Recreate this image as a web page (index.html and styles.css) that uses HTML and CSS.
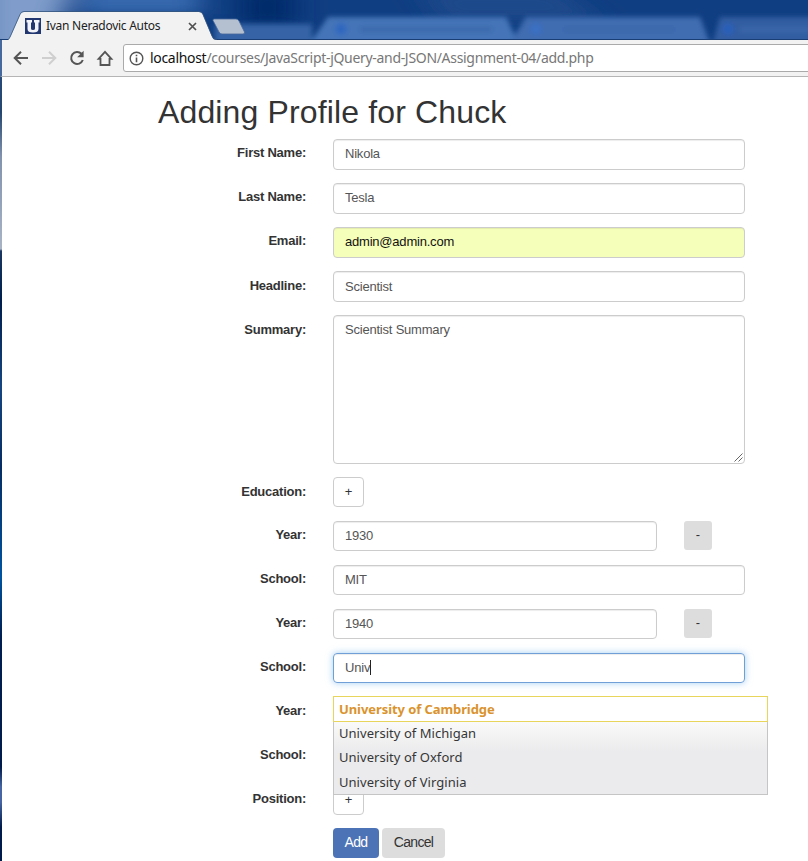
FILE: index.html
```html
<!DOCTYPE html>
<html lang="en">
<head>
<meta charset="utf-8">
<title>Ivan Neradovic Autos</title>
<link rel="stylesheet" href="styles.css">
</head>
<body>
<div class="window">
  <header class="tabs">
    <svg class="glass" width="808" height="40" viewBox="0 0 808 40">
      <defs>
        <filter id="soft" x="-10%" y="-50%" width="120%" height="200%"><feGaussianBlur stdDeviation="2.500"/></filter>
        <filter id="haze" x="-10%" y="-50%" width="120%" height="200%"><feGaussianBlur stdDeviation="14 6"/></filter>
      </defs>
      <g filter="url(#haze)">
        <path d="M-20-20H75L50 50H-20z" fill="#7f9cca"/>
        <path d="M80-20H200V14H80z" fill="#3568ad"/>
        <path d="M240-10H295V24H240z" fill="#002b6a"/>
        <path d="M420-10H560L600 20H440z" fill="#1c488a"/>
      </g>
      <g filter="url(#soft)" fill="#4474b8">
        <path d="M215 24H312V46H215z" fill="#3463a5"/>
        <path d="M328 17H506L520 46H308z"/>
        <path d="M526 17H700L711 46H508z" fill="#3f6cb1"/>
        <path d="M720 17H830V46H712z" fill="#335da1"/>
        <path d="M360 27H492V32H360zM564 27H674V32H564zM740 27H810V32H740z" fill="#3a68aa"/>
        <circle cx="341" cy="29" r="6" fill="#2f67bf"/><circle cx="536" cy="29" r="6" fill="#3a70c3"/><circle cx="728" cy="29" r="6" fill="#2a5fb9"/>
      </g>
      <path d="M0 39.5H808" stroke="#193d75"/>
      <path d="M213 20.500Q212.500 19 214.500 19H236Q238 19 239 21L244.500 32Q245 34 243 34H222Q220 34 219 32z" fill="#b4bfd0" stroke="#48689a" stroke-width=".8"/>
      <path d="M2 40H8Q9.500 39 10.500 36.500L20 15Q21 12 24 12H199Q202 12 203 15L212 36.500Q213 40 217 40z" fill="#f2f2f2"/>
      <path d="M8 39.500Q9.500 38.500 10.500 36L20 14.500Q21 11.500 24 11.500H199Q202 11.500 203 14.500L212 36Q213 39.500 217 39.500" fill="none" stroke="#36577f" stroke-width=".8"/>
    </svg>
    <div class="tab">
      <svg width="16" height="16" viewBox="0 0 16 16"><path fill="#22366f" d="M0 0h16v16H0z"/><path d="M1.500 2H7v2.500H6v6q0 1.500 2 1.500t2-1.500v-6H9V2h5.500v2.500h-1V11q0 3.500-5.500 3.500T2.500 11V4.500h-1z" fill="#f1f3f8"/></svg>
      <span>Ivan Neradovic Autos</span>
      <svg class="close" width="9" height="9" viewBox="0 0 9 9"><path d="M1 1l7 7M8 1L1 8" stroke="#505050" stroke-width="1.700"/></svg>
    </div>
  </header>
  <nav class="toolbar">
    <svg class="nav" width="108" height="20" viewBox="0 0 108 20" fill="none" stroke="#555" stroke-width="2">
      <path d="M21 10H8M14 3.700L7.700 10l6.300 6.300"/>
      <path d="M35 10h13M42 3.700l6.300 6.300L42 16.300" stroke="#cfcfcf"/>
      <path d="M74.500 5.800A6 6 0 1 0 75.800 12"/><path d="M76.600 2.800v6.500h-6.500z" fill="#555" stroke="none"/>
      <path d="M91.600 10.800H93.500V17H102.500V10.800H104.400L98 3.800z" stroke-width="1.800"/>
    </svg>
    <div class="address">
      <svg width="15" height="15" viewBox="0 0 15 15"><circle cx="7.500" cy="7.500" r="6.300" fill="none" stroke="#555" stroke-width="1.400"/><path d="M6.700 3.700h1.600v1.600H6.700zM6.700 6.500h1.600v4.800H6.700z" fill="#555"/></svg>
      <span class="url"><b>localhost</b>/courses/JavaScript-jQuery-and-JSON/Assignment-04/add.php</span>
    </div>
  </nav>
  <div class="viewport">
    <div class="edge"></div>
    <main class="page">
      <h1>Adding Profile for Chuck</h1>
      <form class="form">
        <div class="row"><label>First Name:</label><div class="field">Nikola</div></div>
        <div class="row"><label>Last Name:</label><div class="field">Tesla</div></div>
        <div class="row"><label>Email:</label><div class="field autofill">admin@admin.com</div></div>
        <div class="row low"><label>Headline:</label><div class="field">Scientist</div></div>
        <div class="row tall"><label>Summary:</label><div class="field area">Scientist Summary<svg class="grip" width="9" height="9" viewBox="0 0 9 9"><path d="M.5 8.500l8-8M4.500 8.500l4-4" stroke="#666"/></svg></div></div>
        <div class="row short heading"><label>Education:</label><span class="button plus">+</span></div>
        <div class="row short"><label>Year:</label><div class="field year">1930</div><span class="button minus">-</span></div>
        <div class="row short"><label>School:</label><div class="field">MIT</div></div>
        <div class="row short"><label>Year:</label><div class="field year">1940</div><span class="button minus">-</span></div>
        <div class="row short"><label>School:</label>
          <div class="field focus">Univ<i class="caret"></i>
            <ul class="menu">
              <li class="active"><span>University of Cambridge</span></li>
              <li><span>University of Michigan</span></li>
              <li><span>University of Oxford</span></li>
              <li><span>University of Virginia</span></li>
            </ul>
          </div>
        </div>
        <div class="row short"><label>Year:</label></div>
        <div class="row short"><label>School:</label></div>
        <div class="row last"><label>Position:</label><span class="button plus">+</span></div>
        <div class="actions"><span class="button add">Add</span><span class="button cancel">Cancel</span></div>
      </form>
    </main>
  </div>
</div>
</body>
</html>
```
FILE: styles.css
```css
* { box-sizing: border-box; }
body { margin: 0; background: #fff; color: #333; font: 13px/18px "Liberation Sans", Arial, sans-serif; }
.window { width: 808px; height: 861px; overflow: hidden; display: flex; flex-direction: column; }
.tabs { height: 40px; position: relative; background: #103e82; flex: none; }
.glass { position: absolute; inset: 0; }
.tab { position: relative; display: flex; align-items: center; height: 28px; width: 180px; margin-left: 25px; top: 12px; font: 12px/16px "Noto Sans", sans-serif; color: #222; }
.tab span { margin-left: 5px; white-space: nowrap; letter-spacing: -.27px; }
.close { position: absolute; left: 163px; top: 10px; }
.toolbar { height: 37px; flex: none; background: #f2f2f2; border-bottom: 1px solid #b5b5b5; border-left: 2px solid #45689d; display: flex; padding-top: 4px; }
.nav { margin: 4px 0 0 5px; overflow: visible; flex: none; }
.address { margin-left: 8px; width: 700px; flex: none; height: 28px; border: 1px solid #aaa; border-radius: 3px; background: #fff; display: flex; align-items: center; padding-left: 5px; }
.url { margin-left: 6px; font: 14px/20px "Noto Sans", sans-serif; letter-spacing: -.31px; color: #777; white-space: nowrap; }
.url b { font-weight: 400; color: #111; }
.viewport { display: flex; flex: 1; }
.edge { width: 2px; background: linear-gradient(#284a79 0, #25466f 35px, #8293ae 80px, #a8b3c5 172px, #1a3761 174px, #001e4d 225px, #164580 310px, #062d63 390px, #0053a0 500px, #001e50 560px, #001b4b 690px, #4665a2 710px, #4665a2 725px, #001b4b 750px); }
.page { padding: 17px 0 0 155px; width: 806px; }
h1 { margin: 0; padding-left: 1px; height: 45px; font-size: 32px; line-height: 36px; font-weight: 400; letter-spacing: .14px; white-space: nowrap; }
.form { width: 612px; }
.row { display: flex; height: 44px; align-items: flex-start; }
.row label { width: 149px; margin-right: 27px; text-align: right; font-weight: 700; line-height: 18px; letter-spacing: -.24px; padding-top: 5px; flex: none; }
.row.low label, .row.tall label, .row.heading label { padding-top: 6px; }
.row.tall { height: 162px; }
.row.last { height: 43px; }
.field { width: 412px; height: 31px; border: 1px solid #ccc; border-radius: 4px; padding: 5px 11px; line-height: 18px; letter-spacing: -.21px; color: #555; position: relative; box-shadow: inset 0 1px 1px rgba(0,0,0,.075); }
.short .field { height: 30px; }
.field.year { width: 324px; margin-right: 27px; }
.field.autofill { background: #f6ffb9; color: #111; }
.low .field { padding-top: 6px; }
.field.area { height: 149px; }
.grip { position: absolute; right: 1px; bottom: 1px; }
.field.focus { border-color: #6f9fd6; box-shadow: inset 0 1px 1px rgba(0,0,0,.075), 0 0 7px rgba(102,175,233,.6); }
.caret { display: inline-block; width: 1px; height: 15px; background: #222; vertical-align: -3px; }
.button { display: flex; align-items: center; justify-content: center; height: 30px; border-radius: 4px; }
.plus { width: 31px; border: 1px solid #ccc; background: #fff; padding-bottom: 1px; }
.minus { width: 28px; height: 29px; background: #ddd; border-radius: 3px; padding-bottom: 2px; }
.menu { position: absolute; z-index: 2; left: -1px; top: 42px; width: 435px; height: 99px; margin: 0; padding: 1px 0 0; list-style: none; border: 1px solid #c5c5c5; background: linear-gradient(#fff 0, #fafafa 25px, #ebebed 54px, #ebebed); font: 13px/24px "Noto Sans", sans-serif; letter-spacing: .04px; color: #363636; }
.menu li { height: 24.300px; line-height: 23px; padding-left: 5px; white-space: nowrap; }
.menu .active { height: 26px; line-height: 24px; margin: -2px -1px 0; padding-left: 5px; border: 1px solid #e8d65c; background: #fff; color: #da932d; font-weight: 700; letter-spacing: -.08px; }
.actions { display: flex; gap: 3px; padding-left: 176px; }
.add { width: 46px; background: #4b73b5; color: #fff; }
.cancel { width: 63px; background: #ddd; }
.add, .cancel { font-size: 14px; letter-spacing: -.7px; padding-bottom: 3px; }
```
